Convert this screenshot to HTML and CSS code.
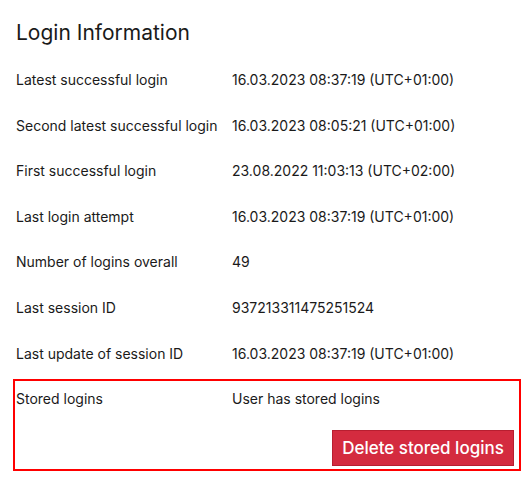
FILE: index.html
```html
<!DOCTYPE html>
<html>
<head>
<meta charset="utf-8">
<link rel="stylesheet" href="styles.css">
</head>
<body>
<div class="page">
  <h1 class="title">Login Information</h1>
  <div class="rows">
    <div class="row"><div class="label">Latest successful login</div><div class="value">16.03.2023 08:37:19 (UTC+01:00)</div></div>
    <div class="row"><div class="label">Second latest successful login</div><div class="value">16.03.2023 08:05:21 (UTC+01:00)</div></div>
    <div class="row"><div class="label">First successful login</div><div class="value">23.08.2022 11:03:13 (UTC+02:00)</div></div>
    <div class="row"><div class="label">Last login attempt</div><div class="value">16.03.2023 08:37:19 (UTC+01:00)</div></div>
    <div class="row"><div class="label">Number of logins overall</div><div class="value">49</div></div>
    <div class="row"><div class="label">Last session ID</div><div class="value">937213311475251524</div></div>
    <div class="row"><div class="label">Last update of session ID</div><div class="value">16.03.2023 08:37:19 (UTC+01:00)</div></div>
  </div>
  <div class="stored">
    <div class="row stored-row"><div class="label">Stored logins</div><div class="value">User has stored logins</div></div>
    <div class="actions"><button class="btn-delete">Delete stored logins</button></div>
  </div>
</div>
</body>
</html>
```
FILE: styles.css
```css
html, body { margin: 0; padding: 0; background: #fff; }
body { font-family: Inter, "Noto Sans", sans-serif; color: #1a1a1a; }
.page { padding: 20px 8px 0 16px; }
.title { margin: 0; font-size: 21px; font-weight: 400; line-height: 26px; color: #1a1a1a; }
.rows { margin-top: 24px; }
.row { display: grid; grid-template-columns: 216px 1fr; font-size: 14px; line-height: 20px; height: 45.6px; }
.label, .value { white-space: nowrap; }
.stored { border: 2px solid #f00; margin: -10px 0 0 -3px; padding: 8px 5px 3px 1px; }
.stored .stored-row { height: 41px; }
.actions { display: flex; justify-content: flex-end; }
.btn-delete { font-family: Inter, "Noto Sans", sans-serif; font-size: 17px; font-weight: 500; color: #fff; background: #d42b3f; border: 1px solid #b81e30; height: 36px; width: 182px; padding: 0; }
```
